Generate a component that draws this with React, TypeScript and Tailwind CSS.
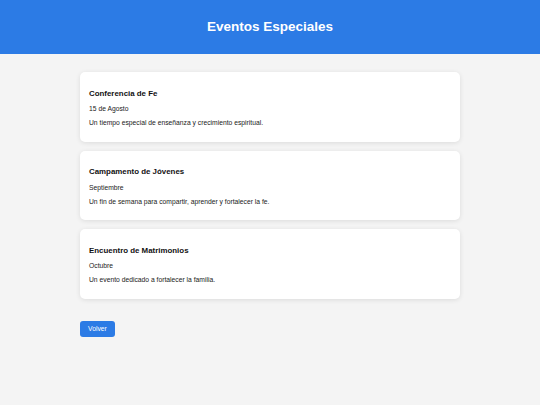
const eventos = [
  { titulo: 'Conferencia de Fe', fecha: '15 de Agosto', texto: 'Un tiempo especial de enseñanza y crecimiento espiritual.' },
  { titulo: 'Campamento de Jóvenes', fecha: 'Septiembre', texto: 'Un fin de semana para compartir, aprender y fortalecer la fe.' },
  { titulo: 'Encuentro de Matrimonios', fecha: 'Octubre', texto: 'Un evento dedicado a fortalecer la familia.' },
];

export default function App() {
  return (
    <div className="min-h-[405px] bg-[#f4f4f4] font-['Liberation_Sans',Arial,sans-serif] text-[#222]">
      {/* Header */}
      <header className="h-[54px] bg-[#2c7be5] flex items-center justify-center">
        <h1 className="text-[13.5px] leading-[16px] font-bold text-white">Eventos Especiales</h1>
      </header>

      <main className="w-[380px] mx-auto pt-[18px]">
        <div className="flex flex-col gap-[9px]">
          {eventos.map((ev) => (
            <article
              key={ev.titulo}
              className="bg-white rounded-[5px] px-[9px] pt-[16.5px] pb-[14.5px] shadow-[0_1px_5px_rgba(0,0,0,0.1)]"
            >
              <h3 className="text-[7.9px] leading-[9px] font-bold text-[#111] mb-[7.5px]">{ev.titulo}</h3>
              <p className="text-[6.75px] leading-[8px] text-[#222] mb-[6px]">{ev.fecha}</p>
              <p className="text-[6.75px] leading-[8px] text-[#222]">{ev.texto}</p>
            </article>
          ))}
        </div>

        <button className="mt-[22px] h-[16px] px-[8px] rounded-[3px] bg-[#2c7be5] text-white text-[6.75px] leading-[8px]">
          Volver
        </button>
      </main>
    </div>
  );
}
